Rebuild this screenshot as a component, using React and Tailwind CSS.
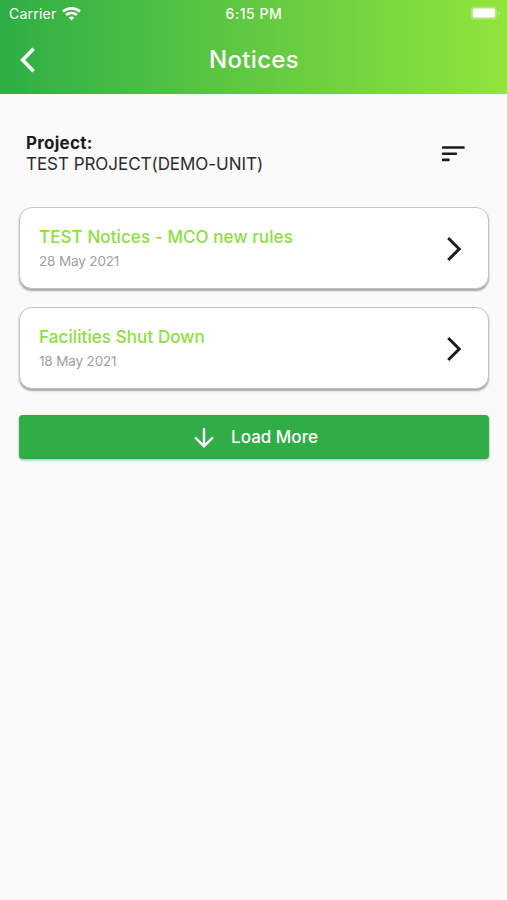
const notices = [
  { id: 1, title: 'TEST Notices - MCO new rules', date: '28 May 2021' },
  { id: 2, title: 'Facilities Shut Down', date: '18 May 2021' },
]

function WifiIcon() {
  return (
    <svg className="ml-[5.5px] h-[14px] w-[19px]" viewBox="0 0 19 14" fill="none" stroke="white" strokeWidth="2.7">
      <path d="M1 4.6C5.7 0.3 13.3 0.3 18 4.6" />
      <path d="M4.1 8.1C7.1 5.3 11.9 5.3 14.9 8.1" />
      <path d="M9.5 13.6L6.6 10.6C8.2 9.1 10.8 9.1 12.4 10.6Z" fill="white" stroke="none" />
    </svg>
  )
}

function BatteryIcon() {
  return (
    <svg className="h-[15px] w-[31px]" viewBox="0 0 31 15">
      <rect x="0.8" y="0.6" width="26" height="13" rx="3.5" fill="white" fillOpacity="0.28" />
      <rect x="2.8" y="2.6" width="22" height="9" rx="1.6" fill="white" />
      <path d="M28.2 5C30.4 5.8 30.4 8.6 28.2 9.4Z" fill="white" fillOpacity="0.3" />
    </svg>
  )
}

function StatusBar() {
  return (
    <div className="grid h-[27px] grid-cols-3 items-center pl-[9px] pr-[6px] text-[14px] text-white">
      <div className="flex items-center">
        <span className="tracking-[0.22px]">Carrier</span>
        <WifiIcon />
      </div>
      <span className="pr-[2px] text-center font-medium tracking-[0.55px]">6:15 PM</span>
      <div className="flex justify-end"><BatteryIcon /></div>
    </div>
  )
}

function Header() {
  return (
    <header className="h-[94px] bg-[linear-gradient(90deg,#2fae46_0%,#92e43c_100%)]">
      <StatusBar />
      <div className="grid h-[66px] grid-cols-[60px_1fr_60px] items-center text-white">
        <button type="button" aria-label="Back" className="pl-[20px]">
          <svg className="h-[26px] w-[16px]" viewBox="0 0 16 26" fill="none" stroke="white" strokeWidth="3.6">
            <path d="M13.6 1.8L2.6 13L13.6 24.2" />
          </svg>
        </button>
        <h1 className="pl-px text-center text-[24px] font-medium tracking-[0.3px]">Notices</h1>
      </div>
    </header>
  )
}

function NoticeCard({ notice }) {
  return (
    <li className="flex h-[82px] items-center justify-between rounded-[13px] border border-[#c4c4c4] bg-white pt-px pl-[19px] pr-[26px] shadow-[0_2px_2px_rgba(0,0,0,0.34)]">
      <div>
        <h2 className="text-[17px] leading-[24px] font-medium tracking-[0.09px] text-[#8be040]">{notice.title}</h2>
        <p className="mt-px text-[13.5px] leading-[22px] tracking-[-0.15px] text-[#a0a0a0]">{notice.date}</p>
      </div>
      <svg className="h-[26px] w-[16px]" viewBox="0 0 16 26" fill="none" stroke="#1c1c1c" strokeWidth="3">
        <path d="M2.2 2L13.2 13L2.2 24" />
      </svg>
    </li>
  )
}

export default function App() {
  return (
    <div className="min-h-[900px] bg-[#fafafa] font-['Inter',sans-serif]">
      <Header />
      <main className="pr-[18px] pl-[19px]">
        <div className="flex items-start justify-between pt-[39px] pr-[24px] pl-[7px]">
          <div className="text-[17px] leading-[21px] tracking-[-0.04px] text-[#2b2b2b]">
            <p className="font-bold tracking-[0.25px] text-[#1c1c1c]">Project:</p>
            <p>TEST PROJECT(DEMO-UNIT)</p>
          </div>
          <button type="button" aria-label="Sort" className="mt-[13px]">
            <svg className="block h-[16px] w-[23px]" viewBox="0 0 23 16" fill="#1c1c1c">
              <rect x="0" y="0.2" width="22.6" height="2.6" rx="0.6" />
              <rect x="0" y="6.4" width="15" height="2.6" rx="0.6" />
              <rect x="0" y="12.6" width="7.6" height="2.6" rx="0.6" />
            </svg>
          </button>
        </div>
        <ul className="mt-[32px] grid gap-[18px]">
          {notices.map((notice) => <NoticeCard key={notice.id} notice={notice} />)}
        </ul>
        <button type="button" className="mt-[26px] flex h-[44px] w-full items-center justify-center rounded-[4px] bg-[#30ad46] pt-px pl-[4px] text-[17px] font-medium text-white shadow-[0_1px_3px_rgba(0,0,0,0.3)]">
          <svg className="mr-[17px] h-[20px] w-[20px]" viewBox="0 0 20 20" fill="none" stroke="white" strokeWidth="2.4" strokeLinecap="round">
            <path d="M10 1V18" />
            <path d="M1.8 10.2L10 18.2L18.2 10.2" />
          </svg>
          Load More
        </button>
      </main>
    </div>
  )
}
